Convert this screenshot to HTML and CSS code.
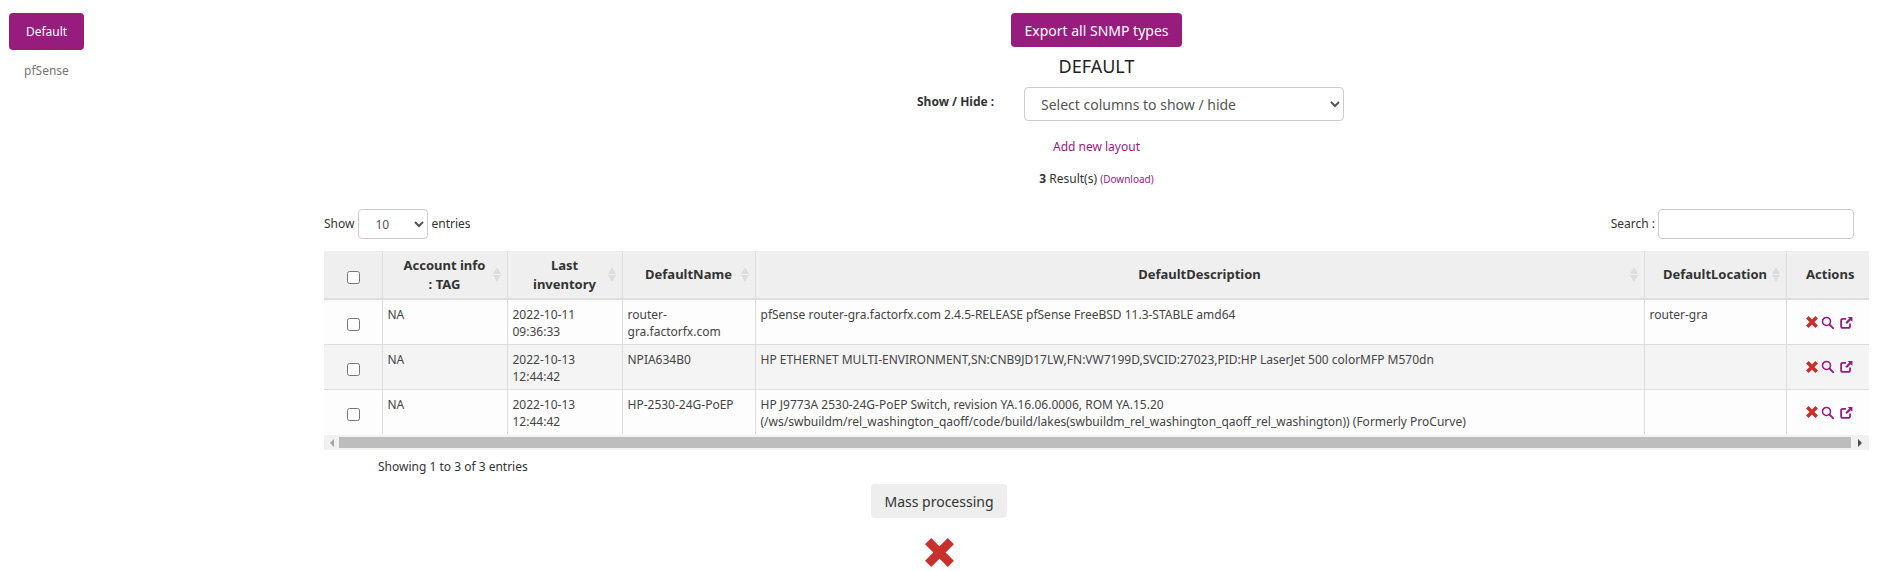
FILE: index.html
```html
<!DOCTYPE html>
<html lang="en">
<head>
    <meta charset="UTF-8">
    <title>SNMP types</title>
    <link rel="stylesheet" href="styles.css">
</head>
<body>
    <svg class="defs" width="0" height="0">
        <symbol id="ico-x" viewBox="0 0 28 28">
            <path d="M6 6 L22 22 M22 6 L6 22" fill="none" stroke="#c9302c" stroke-width="8.4" stroke-linecap="square"/>
        </symbol>
        <symbol id="ico-search" viewBox="0 0 14 14">
            <circle cx="5.9" cy="5.9" r="4.3" fill="none" stroke="#981b7e" stroke-width="1.7"/>
            <path d="M9 9 L13 13" stroke="#981b7e" stroke-width="2.1" stroke-linecap="round"/>
        </symbol>
        <symbol id="ico-open" viewBox="0 0 14 14">
            <path d="M6.5 3 H3 Q1.2 3 1.2 4.8 V11 Q1.2 12.8 3 12.8 H9 Q10.8 12.8 10.8 11 V8.2" fill="none" stroke="#981b7e" stroke-width="1.9"/>
            <path d="M8.2 1 H13.4 V6.2 L11.6 4.5 L7.4 8.6 L5.8 7 L10 2.8 Z" fill="#981b7e"/>
        </symbol>
    </svg>
    <div class="page">
        <aside class="side">
            <a class="side-item active">Default</a>
            <a class="side-item">pfSense</a>
        </aside>
        <main class="main">
            <div class="center">
                <button class="btn btn-main">Export all SNMP types</button>
                <h2>DEFAULT</h2>
                <div class="cols-row">
                    <label>Show / Hide :</label>
                    <select class="cols-select"><option>Select columns to show / hide</option></select>
                </div>
                <a class="add-link">Add new layout</a>
                <p class="results"><b>3</b> Result(s) <a>(Download)</a></p>
            </div>
            <div class="tools">
                <div class="length">Show
                    <select class="length-select"><option>10</option></select>
                    entries</div>
                <div class="search">Search : <input type="text"></div>
            </div>
            <table class="grid">
                <colgroup>
                    <col class="c-check"><col class="c-tag"><col class="c-inv"><col class="c-name"><col class="c-desc"><col class="c-loc"><col class="c-act">
                </colgroup>
                <thead>
                    <tr>
                        <th><input type="checkbox"></th>
                        <th class="sort">Account info : TAG</th>
                        <th class="sort">Last inventory</th>
                        <th class="sort">DefaultName</th>
                        <th class="sort">DefaultDescription</th>
                        <th class="sort">DefaultLocation</th>
                        <th>Actions</th>
                    </tr>
                </thead>
                <tbody>
                    <tr>
                        <td class="mid"><input type="checkbox"></td>
                        <td>NA</td>
                        <td>2022-10-11 09:36:33</td>
                        <td>router-gra.factorfx.com</td>
                        <td>pfSense router-gra.factorfx.com 2.4.5-RELEASE pfSense FreeBSD 11.3-STABLE amd64</td>
                        <td>router-gra</td>
                        <td class="mid acts"><svg class="i-x"><use href="#ico-x"/></svg><svg class="i-s"><use href="#ico-search"/></svg><svg class="i-o"><use href="#ico-open"/></svg></td>
                    </tr>
                    <tr>
                        <td class="mid"><input type="checkbox"></td>
                        <td>NA</td>
                        <td>2022-10-13 12:44:42</td>
                        <td>NPIA634B0</td>
                        <td>HP ETHERNET MULTI-ENVIRONMENT,SN:CNB9JD17LW,FN:VW7199D,SVCID:27023,PID:HP LaserJet 500 colorMFP M570dn</td>
                        <td></td>
                        <td class="mid acts"><svg class="i-x"><use href="#ico-x"/></svg><svg class="i-s"><use href="#ico-search"/></svg><svg class="i-o"><use href="#ico-open"/></svg></td>
                    </tr>
                    <tr>
                        <td class="mid"><input type="checkbox"></td>
                        <td>NA</td>
                        <td>2022-10-13 12:44:42</td>
                        <td>HP-2530-24G-PoEP</td>
                        <td>HP J9773A 2530-24G-PoEP Switch, revision YA.16.06.0006, ROM YA.15.20 (/ws/swbuildm/rel_washington_qaoff/code/build/lakes(swbuildm_rel_washington_qaoff_rel_washington)) (Formerly ProCurve)</td>
                        <td></td>
                        <td class="mid acts"><svg class="i-x"><use href="#ico-x"/></svg><svg class="i-s"><use href="#ico-search"/></svg><svg class="i-o"><use href="#ico-open"/></svg></td>
                    </tr>
                </tbody>
            </table>
            <div class="hscroll">
                <span class="arrow left"></span>
                <div class="thumb"></div>
                <span class="arrow right"></span>
            </div>
            <div class="info">Showing 1 to 3 of 3 entries</div>
            <div class="center mass">
                <button class="btn btn-grey">Mass processing</button>
                <svg class="big-x"><use href="#ico-x"/></svg>
            </div>
        </main>
    </div>
</body>
</html>
```
FILE: styles.css
```css
* {
    box-sizing: border-box;
}
html, body {
    overflow: hidden;
}
body {
    margin: 0;
    height: 571px;
    font-family: "Noto Sans", sans-serif;
    font-size: 12px;
    line-height: 18px;
    color: #333;
    background: #fff;
}
.defs {
    position: absolute;
}
a {
    color: #981b7e;
}
.page {
    display: flex;
    padding-right: 21px;
}
.side {
    width: 324px;
    flex: none;
    padding: 13px 0 0 9px;
}
.side-item {
    display: block;
    width: 75px;
    height: 37px;
    line-height: 37px;
    text-align: center;
    color: #777;
    margin-bottom: 2px;
    border-radius: 4px;
}
.side-item.active {
    background: #981b7e;
    color: #fff;
}
.main {
    flex: 1;
    min-width: 0;
    padding-top: 13px;
}
.center {
    display: flex;
    flex-direction: column;
    align-items: center;
}
.btn {
    border: 0;
    border-radius: 4px;
    font-family: inherit;
    font-size: 14px;
    height: 34px;
    padding: 0 13px;
}
.btn-main {
    background: #981b7e;
    color: #fff;
}
.btn-grey {
    background: #eee;
    color: #333;
}
h2 {
    margin: 9px 0 0;
    font-size: 18px;
    font-weight: 400;
    line-height: 20px;
    color: #222;
}
.cols-row {
    display: flex;
    align-items: center;
    margin-top: 11px;
    margin-left: 68px;
}
.cols-row label {
    width: 107px;
    font-weight: 700;
    margin-top: -5px;
}
select {
    font-family: inherit;
    color: #555;
    background-color: #fff;
    border: 1px solid #ccc;
    border-radius: 4px;
}
.cols-select {
    width: 320px;
    height: 34px;
    font-size: 14px;
    padding: 0 12px;
}
.add-link {
    margin: 17px 0 0;
}
.results {
    margin: 14px 0 0;
}
.results a {
    font-size: 10px;
}
.tools {
    display: flex;
    justify-content: space-between;
    margin-top: 21px;
    padding-right: 15px;
}
.length, .search {
    display: flex;
    align-items: center;
    gap: 3px;
    height: 30px;
}
.length-select {
    width: 70px;
    height: 30px;
    font-size: 12px;
    padding: 0 12px;
    margin-left: 1px;
}
.search input {
    width: 196px;
    height: 30px;
    border: 1px solid #ccc;
    border-radius: 4px;
}
.grid {
    width: 100%;
    table-layout: fixed;
    border-collapse: collapse;
    margin-top: 12px;
}
.c-check { width: 58px; }
.c-tag { width: 125px; }
.c-inv { width: 115px; }
.c-name { width: 133px; }
.c-desc { width: 889px; }
.c-loc { width: 142px; }
.c-act { width: 83px; }
.grid th {
    height: 48px;
    padding: 0 18px;
    background: #efefef;
    text-align: center;
    font-size: 13px;
    font-weight: 700;
    line-height: 19px;
    border-left: 1px solid #ddd;
    border-bottom: 2px solid #ddd;
}
.grid th:first-child, .grid td:first-child {
    border-left: 0;
}
.grid th:first-child, .grid th:last-child {
    padding: 0;
}
.grid th:first-child, .grid td:first-child {
    padding-left: 2px;
}
.grid th:last-child {
    padding-left: 5px;
}
.grid th.sort {
    position: relative;
}
.grid th.sort::before, .grid th.sort::after {
    content: "";
    position: absolute;
    right: 6px;
    border-left: 4px solid transparent;
    border-right: 4px solid transparent;
}
.grid th.sort::before {
    top: 16px;
    border-bottom: 7px solid #ddd;
}
.grid th.sort::after {
    top: 24px;
    border-top: 7px solid #ddd;
}
.grid td {
    height: 45px;
    padding: 6px 5px 0 5px;
    vertical-align: top;
    line-height: 17px;
    color: #444;
    background: #fdfdfd;
    border-left: 1px solid #ddd;
    border-bottom: 1px solid #ddd;
}
.grid tbody tr:nth-child(2) td {
    background: #f4f4f4;
}
.grid tbody tr:last-child td {
    border-bottom: 0;
}
.grid td.mid {
    padding-top: 0;
    padding-right: 0;
    vertical-align: middle;
    text-align: center;
}
.grid td.acts {
    padding-left: 4px;
    padding-bottom: 2px;
}
input[type="checkbox"] {
    width: 13px;
    height: 13px;
    margin: 4px 0 0;
    vertical-align: middle;
}
.acts svg {
    vertical-align: middle;
}
.i-x {
    width: 12px;
    height: 12px;
}
.i-s {
    width: 13px;
    height: 13px;
    margin-left: 3px;
}
.i-o {
    width: 13px;
    height: 13px;
    margin-left: 6px;
}
.hscroll {
    display: flex;
    align-items: center;
    height: 15px;
    background: #f1f1f1;
    margin-top: 1px;
}
.thumb {
    flex: 1;
    height: 11px;
    background: #bdbdbd;
}
.arrow {
    width: 15px;
    display: flex;
    justify-content: center;
}
.arrow.right {
    width: 18px;
}
.arrow::before {
    content: "";
    border-top: 4px solid transparent;
    border-bottom: 4px solid transparent;
}
.arrow.left::before {
    border-right: 4px solid #a3a3a3;
}
.arrow.right::before {
    border-left: 4px solid #505050;
}
.info {
    margin: 8px 0 0 54px;
}
.mass {
    margin-top: 8px;
    margin-right: 315px;
}
.big-x {
    width: 29px;
    height: 29px;
    margin-top: 20px;
}
```
